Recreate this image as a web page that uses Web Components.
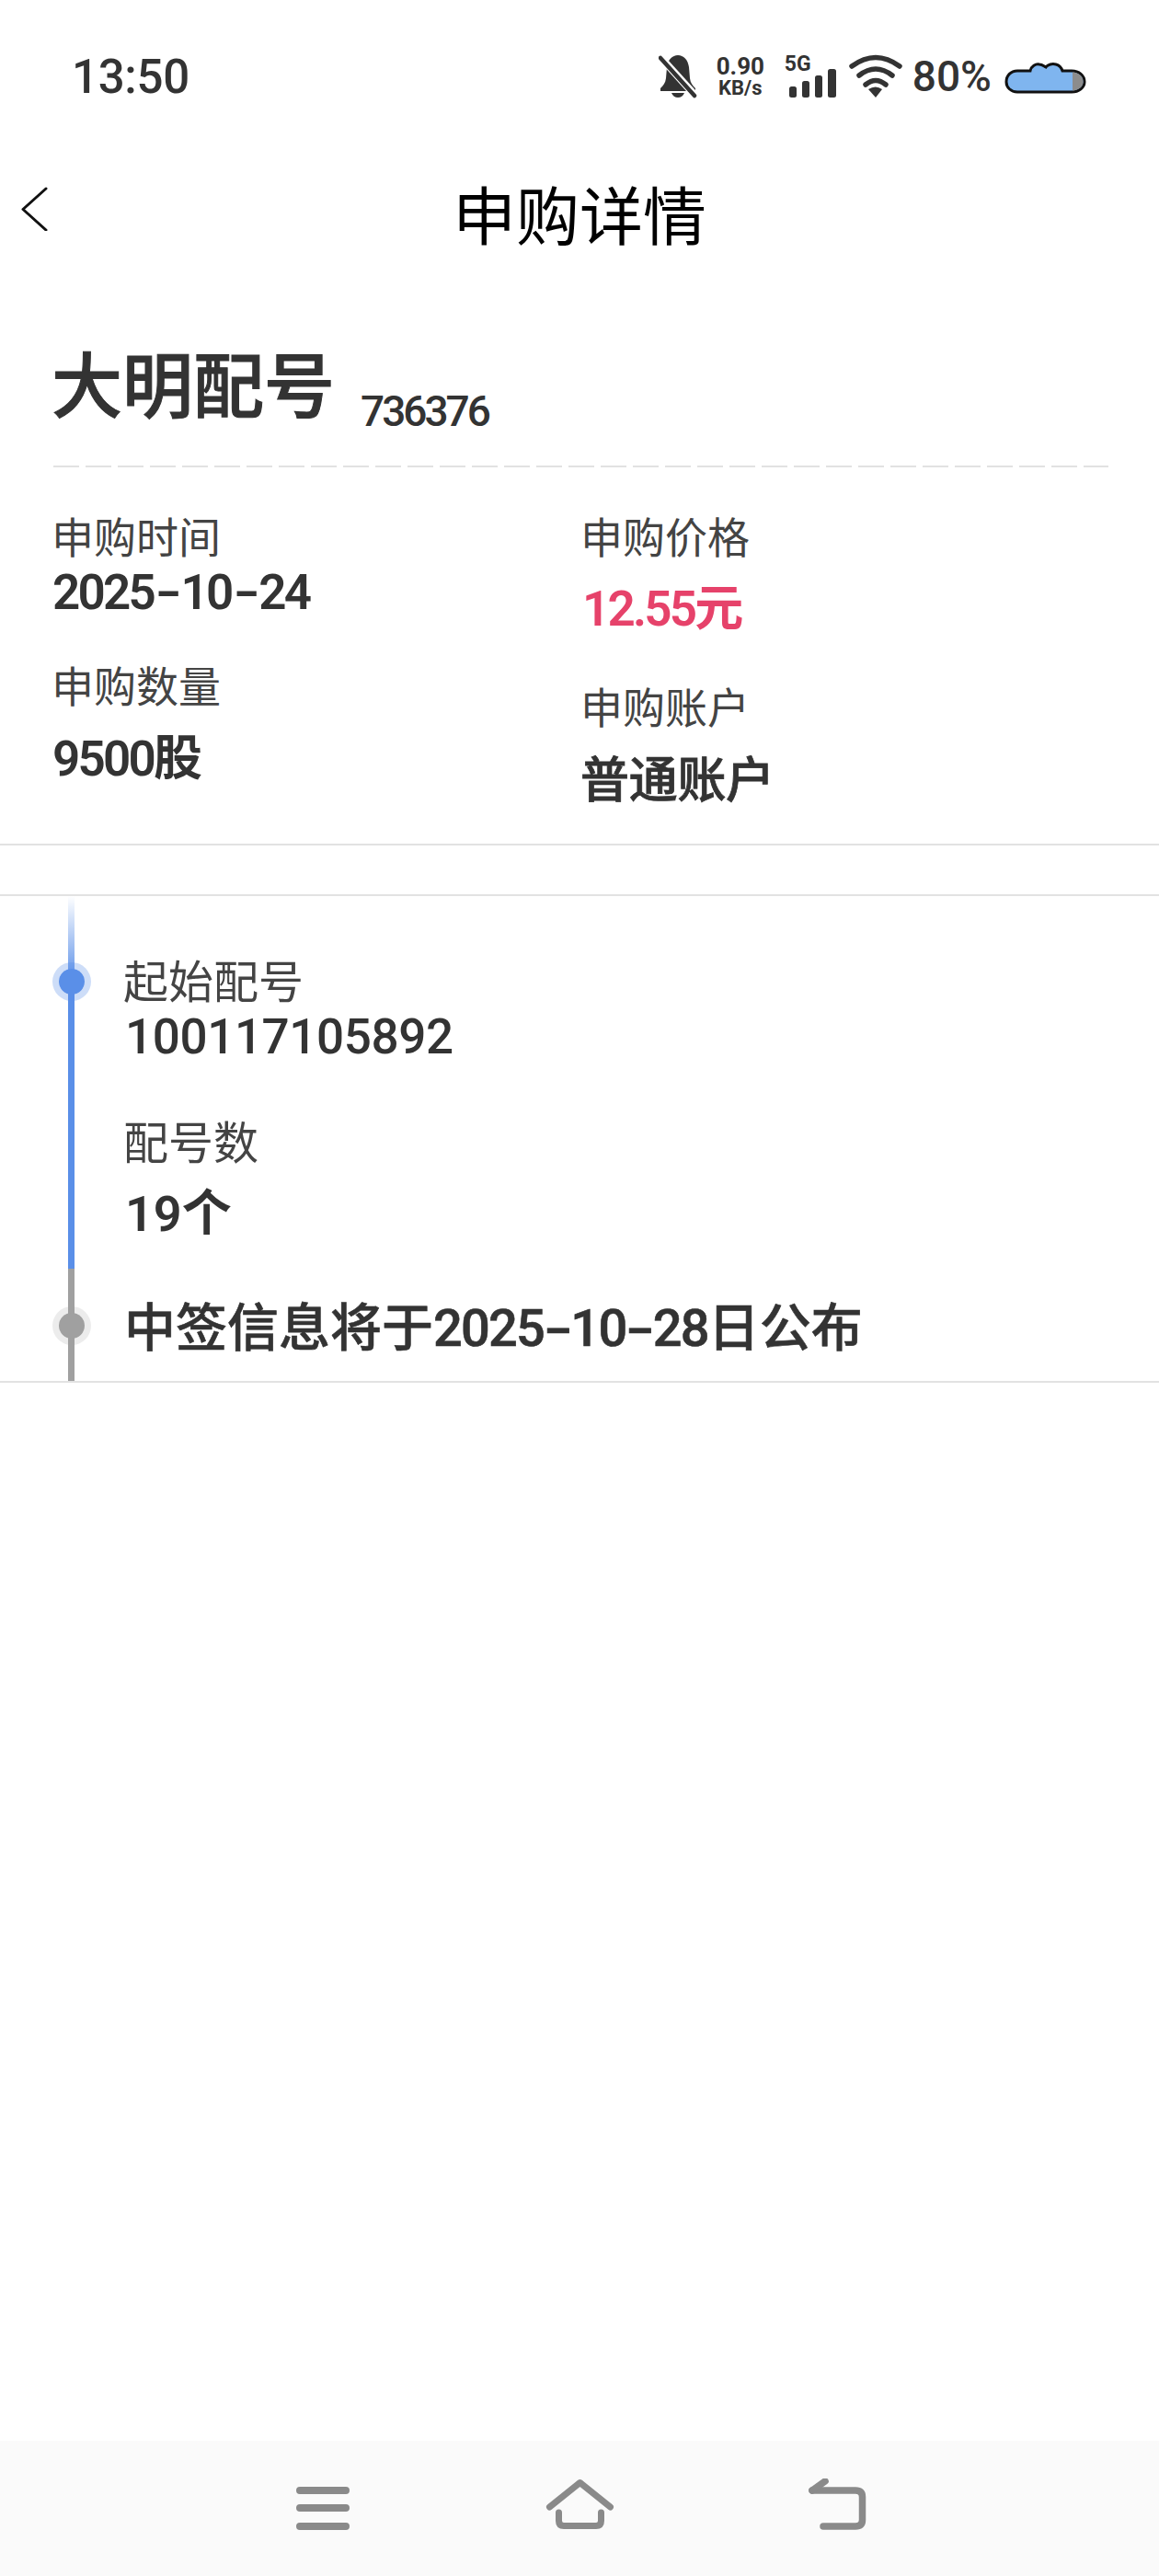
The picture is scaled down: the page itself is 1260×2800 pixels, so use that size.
<!DOCTYPE html>
<html lang="zh">
<head>
<meta charset="utf-8">
<title>申购详情</title>
<style>
    html, body { margin: 0; padding: 0; background: #fff; }
    body {
        width: 1260px;
        height: 2800px;
        display: flex;
        flex-direction: column;
        font-family: Roboto, "Noto Sans CJK SC", sans-serif;
        color: #333;
    }
    app-nav-bar { margin-top: auto; }
</style>
</head>
<body>
<app-status-bar></app-status-bar>
<app-header>申购详情</app-header>
<stock-card name="大明配号" code="736376">
    <stock-field slot="left" label="申购时间" value="2025-10-24" gap="3"></stock-field>
    <stock-field slot="left" label="申购数量" value="9500股" gap="22" top="39"></stock-field>
    <stock-field slot="right" label="申购价格" value="12.55元" gap="21" tone="price"></stock-field>
    <stock-field slot="right" label="申购账户" value="普通账户" gap="23" top="44" tone="wide"></stock-field>
</stock-card>
<app-timeline></app-timeline>
<app-nav-bar></app-nav-bar>

<script>
const wideDash = (text) => text.replace(/-/g, '<span class="dash">-</span>');

class AppStatusBar extends HTMLElement {
    connectedCallback() {
        this.attachShadow({ mode: 'open' });
        this.shadowRoot.innerHTML = `
            <style>
                :host { display: flex; align-items: center; height: 158px; padding: 4px 78px 0 78px; color: #333; font-family: Roboto, sans-serif; }
                .time { font-size: 51px; font-weight: 500; letter-spacing: -0.3px; line-height: 60px; margin: 2px auto 0 0; }
                svg { display: block; flex: none; }
                .speed { display: flex; flex-direction: column; align-items: center; width: 54px; margin-left: 20px; font-weight: 700; }
                .speed b { font-size: 26px; line-height: 26px; font-weight: 700; }
                .speed span { font-size: 22px; line-height: 22px; }
                .net { position: relative; margin-left: 23px; width: 54px; height: 46px; }
                .net span { position: absolute; left: -2px; top: -2px; font-size: 23px; line-height: 24px; font-weight: 700; }
                .wifi { margin-left: 14px; }
                .pct { font-size: 46px; font-weight: 500; line-height: 50px; margin-left: 11px; }
                .bat { margin-left: 14px; }
            </style>
            <span class="time">13:50</span>
            <svg width="42" height="48" viewBox="0 0 42 48">
                <path d="M21 1C15 1 10 6 9 14L8 26C7.500 31 5 34 2 37V40H40V37C37 34 34.500 31 34 26L33 14C32 6 27 1 21 1Z" fill="#333"/>
                <path d="M14 42h14c-1 3-4 5-7 5s-6-2-7-5z" fill="#333"/>
                <path d="M1 2l39 43" stroke="#fff" stroke-width="8"/>
                <path d="M2 4l37 41" stroke="#333" stroke-width="4.500" stroke-linecap="round"/>
            </svg>
            <div class="speed"><b>0.90</b><span>KB/s</span></div>
            <div class="net">
                <span>5G</span>
                <svg width="54" height="46" viewBox="0 0 54 46">
                    <rect x="3" y="34" width="8" height="12" rx="2.500" fill="#333"/>
                    <rect x="17" y="28" width="8" height="18" rx="2.500" fill="#333"/>
                    <rect x="31" y="22" width="8" height="24" rx="2.500" fill="#333"/>
                    <rect x="45" y="15" width="9" height="31" rx="2.500" fill="#333"/>
                </svg>
            </div>
            <svg class="wifi" width="58" height="48" viewBox="0 0 58 48">
                <g fill="none" stroke="#333" stroke-width="5.500" stroke-linecap="round">
                    <path d="M3 13Q29 -6 55 13"/>
                    <path d="M11 23Q29 9 47 23"/>
                    <path d="M18 33Q29 24 40 33"/>
                </g>
                <path d="M21 38Q29 33 36 38L29 47z" fill="#333"/>
            </svg>
            <span class="pct">80%</span>
            <svg class="bat" width="90" height="38" viewBox="0 0 90 38">
                <path d="M14 13H28C29 8 34 5 38 6C41 6 43 8 45 9C47 6 52 5 56 6C60 7 62 10 63 13H73C81 13 87 18 87 25C87 31 81 36 73 36H14C7 36 2 31 2 25C2 18 7 13 14 13Z" fill="#7fb5ef" stroke="#111" stroke-width="3"/>
                <path d="M74 14.500C81 15 85.500 19 85.500 25C85.500 30 81 34 74 34.500Z" fill="#8c8c8c"/>
            </svg>
        `;
    }
}

class AppHeader extends HTMLElement {
    connectedCallback() {
        this.attachShadow({ mode: 'open' });
        this.shadowRoot.innerHTML = `
            <style>
                :host { display: block; position: relative; height: 144px; }
                .title { display: block; text-align: center; font-family: "Noto Sans CJK SC", sans-serif; font-size: 69px; line-height: 138px; color: #000; }
                svg { position: absolute; left: 22px; top: 41px; }
            </style>
            <svg width="30" height="48" viewBox="0 0 30 48"><path d="M28 2L3 24.500L28 47" fill="none" stroke="#111" stroke-width="3" stroke-linecap="round" stroke-linejoin="round"/></svg>
            <span class="title"><slot></slot></span>
        `;
    }
}

class StockField extends HTMLElement {
    connectedCallback() {
        const tone = this.getAttribute('tone') || '';
        this.attachShadow({ mode: 'open' });
        this.shadowRoot.innerHTML = `
            <style>
                :host { display: flex; flex-direction: column; font-family: Roboto, "Noto Sans CJK SC", sans-serif; }
                .label { font-size: 46px; line-height: 60px; color: #444; font-family: "Noto Sans CJK SC", sans-serif; }
                .value { font-size: 53px; line-height: 60px; font-weight: 600; color: #333; letter-spacing: -2.800px; margin-left: 1px; white-space: nowrap; }
                .value.price { color: #e6426a; margin-left: 2px; }
                .value.wide { font-size: 53px; font-weight: 500; -webkit-text-stroke: 0.8px #333; letter-spacing: -0.3px; margin-left: 0; }
                .dash { display: inline-block; margin: 0 6.500px; transform: scaleX(1.5); }
            </style>
            <span class="label" style="margin-top:${this.getAttribute('top') || 0}px">${this.getAttribute('label')}</span>
            <span class="value ${tone}" style="margin-top:${this.getAttribute('gap') || 0}px">${wideDash(this.getAttribute('value'))}</span>
        `;
    }
}

class StockCard extends HTMLElement {
    connectedCallback() {
        this.attachShadow({ mode: 'open' });
        this.shadowRoot.innerHTML = `
            <style>
                :host { display: block; padding: 74px 55px 38px 56px; border-bottom: 2px solid #e2e2e2; font-family: Roboto, "Noto Sans CJK SC", sans-serif; }
                .head { display: flex; align-items: flex-start; gap: 28px; height: 80px; padding-bottom: 48px; background: repeating-linear-gradient(90deg, #e2e2e2 0 28px, transparent 28px 35px) 2px bottom / 100% 2px no-repeat; }
                .name { font-size: 77px; line-height: 80px; font-weight: 500; -webkit-text-stroke: 1px #333; margin-top: -5px; font-family: "Noto Sans CJK SC", sans-serif; color: #333; }
                .code { font-size: 46px; line-height: 50px; font-weight: 500; letter-spacing: -3px; margin-top: 42px; color: #333; }
                .cols { display: grid; grid-template-columns: 575px 1fr; margin-top: 43px; }
                .col { display: flex; flex-direction: column; }
            </style>
            <div class="head"><span class="name">${this.getAttribute('name')}</span><span class="code">${this.getAttribute('code')}</span></div>
            <div class="cols">
                <div class="col"><slot name="left"></slot></div>
                <div class="col"><slot name="right"></slot></div>
            </div>
        `;
    }
}

class AppTimeline extends HTMLElement {
    connectedCallback() {
        this.attachShadow({ mode: 'open' });
        this.shadowRoot.innerHTML = `
            <style>
                :host { display: grid; grid-template-columns: 134px 1fr; height: 527px; margin-top: 53px; border-top: 2px solid #e2e2e2; border-bottom: 2px solid #e2e2e2; font-family: Roboto, "Noto Sans CJK SC", sans-serif; color: #333; }
                .rail { display: flex; flex-direction: column; width: 7px; margin-left: 74px; }
                .seg { position: relative; }
                .fade { height: 93px; background: linear-gradient(#fff, #5a8fe8); }
                .blue { height: 312px; background: #5a8fe8; }
                .grey { flex: 1; background: #a0a0a0; }
                .dot { position: absolute; left: -17.500px; width: 28px; height: 28px; border-radius: 50%; border: 7px solid; background-clip: padding-box; }
                .dot.on { top: -21px; background: #5a8fe8; background-clip: padding-box; border-color: #5a8fe84d; }
                .dot.off { top: 41px; background: #a0a0a0; background-clip: padding-box; border-color: #a0a0a033; }
                .body { display: flex; flex-direction: column; white-space: nowrap; }
                .label { font-size: 49px; line-height: 60px; font-family: "Noto Sans CJK SC", sans-serif; color: #444; }
                .value { font-size: 53px; line-height: 60px; font-weight: 500; letter-spacing: -0.4px; margin-left: 2px; }
                .value.count { font-weight: 600; letter-spacing: 0; font-size: 54px; }
                .note { font-size: 56px; line-height: 60px; font-weight: 500; -webkit-text-stroke: 0.6px #333; margin-left: 1px; }
                .date { letter-spacing: -1.800px; }
                .dash { display: inline-block; margin: 0 6px; transform: scaleX(1.6); }
            </style>
            <div class="rail">
                <div class="seg fade"></div>
                <div class="seg blue"><span class="dot on"></span></div>
                <div class="seg grey"><span class="dot off"></span></div>
            </div>
            <div class="body">
                <span class="label" style="margin-top:60px">起始配号</span>
                <span class="value" style="margin-top:3px">100117105892</span>
                <span class="label" style="margin-top:52px">配号数</span>
                <span class="value count" style="margin-top:21px">19个</span>
                <span class="note" style="margin-top:64px">中签信息将于<span class="date">${wideDash('2025-10-28')}</span>日公布</span>
            </div>
        `;
    }
}

class AppNavBar extends HTMLElement {
    connectedCallback() {
        this.attachShadow({ mode: 'open' });
        this.shadowRoot.innerHTML = `
            <style>
                :host { display: flex; height: 147px; background: #fafafa; padding: 41px 0 0 321px; box-sizing: border-box; }
                svg { display: block; flex: none; }
                g { fill: none; stroke: #8a8a8a; stroke-width: 8; stroke-linecap: round; stroke-linejoin: round; }
            </style>
            <svg width="60" height="60" viewBox="0 0 60 60"><g>
                <path d="M5 13H55M5 32H55M5 52H55"/>
            </g></svg>
            <svg style="margin-left:212px" width="76" height="60" viewBox="0 0 76 60"><g>
                <path d="M4.500 31L37.500 4.500L70.500 31" stroke-width="7"/>
                <path d="M14.500 37V46Q14.500 51.500 20 51.500H55Q60.500 51.500 60.500 46V37" stroke-width="7"/>
            </g></svg>
            <svg style="margin-left:210px" width="66" height="60" viewBox="0 0 66 60"><g>
                <path d="M4 13H51Q58.500 13 58.500 20V45Q58.500 52 51 52H16" stroke-width="7.500"/>
                <path d="M4 13L18 3" stroke-width="7.500"/>
            </g></svg>
        `;
    }
}

customElements.define('app-status-bar', AppStatusBar);
customElements.define('app-header', AppHeader);
customElements.define('stock-field', StockField);
customElements.define('stock-card', StockCard);
customElements.define('app-timeline', AppTimeline);
customElements.define('app-nav-bar', AppNavBar);
</script>
</body>
</html>
